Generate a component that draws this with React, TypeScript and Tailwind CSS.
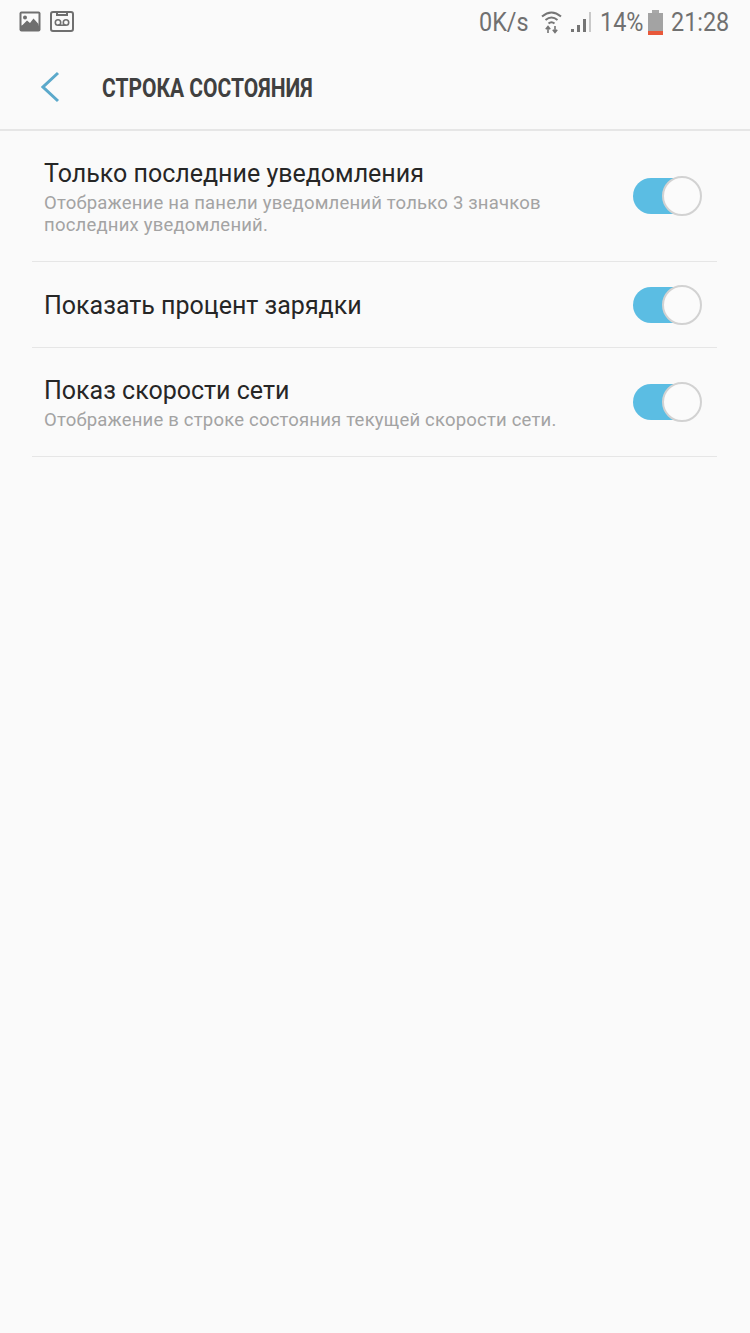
const font = "font-['Roboto',sans-serif]";

function Toggle() {
  return (
    <div className="relative h-[36px] w-[69px] shrink-0">
      <div className="h-[36px] w-[66px] rounded-full bg-[#5bbde3]" />
      <div className="absolute -top-[2px] right-0 h-[40px] w-[40px] rounded-full border-2 border-[#d2d2d2] bg-[#fbfbfb]" />
    </div>
  );
}

function PictureIcon() {
  return (
    <svg width="22" height="21" viewBox="0 0 22 21">
      <rect x="0.5" y="0.5" width="21" height="20" rx="2" fill="#6f6f6f" />
      <rect x="2.5" y="2.5" width="17" height="12" fill="#fafafa" />
      <circle cx="6" cy="6.5" r="2" fill="#6f6f6f" />
      <path d="M2.5 15 L8 9.5 L11 12 L14.5 7.5 L19.5 13 V15 Z" fill="#6f6f6f" />
    </svg>
  );
}

function VoicemailIcon() {
  return (
    <svg width="24" height="21" viewBox="0 0 24 21" fill="none" stroke="#6f6f6f">
      <rect x="1" y="1" width="22" height="19" rx="2" strokeWidth="2" />
      <path d="M7 1.5 V4 H17 V1.5" strokeWidth="2" />
      <circle cx="8" cy="11.5" r="2.7" strokeWidth="1.6" />
      <circle cx="16" cy="11.5" r="2.7" strokeWidth="1.6" />
      <path d="M8 14.2 H16" strokeWidth="1.6" />
    </svg>
  );
}

function WifiIcon() {
  return (
    <svg width="21" height="24" viewBox="0 0 21 24" fill="none" stroke="#757575" strokeWidth="2">
      <path d="M1 6.5 Q10.5 -1.5 20 6.5" />
      <path d="M4.5 10 Q10.5 5 16.5 10" />
      <path d="M7.5 13.5 Q10.5 11 13.5 13.5" />
      <path d="M7 23 V17 M4.8 19.2 L7 16.5 L9.2 19.2" strokeWidth="1.6" />
      <path d="M14 16 V22 M11.8 19.8 L14 22.5 L16.2 19.8" strokeWidth="1.6" />
    </svg>
  );
}

function SignalIcon() {
  return (
    <svg width="21" height="24" viewBox="0 0 21 24">
      <rect x="1" y="19" width="3" height="3" fill="#757575" />
      <rect x="7" y="15" width="3" height="7" fill="#757575" />
      <rect x="13" y="9" width="3" height="13" fill="#757575" />
      <rect x="19" y="2" width="2" height="20" fill="#c9c9c9" />
    </svg>
  );
}

function BatteryIcon() {
  return (
    <div className="flex h-[25px] w-[15px] flex-col items-center">
      <div className="h-[3px] w-[7px] bg-[#a8a8a8]" />
      <div className="h-[18px] w-[15px] bg-[#a3a3a3]" />
      <div className="h-[4px] w-[15px] bg-[#e8583a]" />
    </div>
  );
}

function StatusText({ width, text }: { width: string; text: string }) {
  return (
    <span className={`block ${width}`}>
      <span className="block origin-left scale-x-[0.9] whitespace-nowrap">{text}</span>
    </span>
  );
}

function StatusBar() {
  return (
    <div className="flex h-[44px] items-center justify-between pl-[19px] pr-[20px]">
      <div className="mb-px flex items-center gap-[9px]">
        <PictureIcon />
        <VoicemailIcon />
      </div>
      <div className="flex items-center text-[26px] leading-none text-[#707070]">
        <StatusText width="w-[49px]" text="0K/s" />
        <span className="ml-[13px]"><WifiIcon /></span>
        <span className="ml-[8px]"><SignalIcon /></span>
        <span className="ml-[9px]"><StatusText width="w-[42px]" text="14%" /></span>
        <span className="ml-[6px]"><BatteryIcon /></span>
        <span className="ml-[8px]"><StatusText width="w-[59px]" text="21:28" /></span>
      </div>
    </div>
  );
}

function Header() {
  return (
    <div className="flex h-[87px] items-center border-b-2 border-[#e6e6e6] pl-[41px]">
      <svg width="19" height="32" viewBox="0 0 19 32" fill="none" stroke="#5ba9cb" strokeWidth="3">
        <path d="M17 2 L2 16 L17 30" />
      </svg>
      <h1 className="ml-[42px] mt-[3px] origin-left scale-x-[0.84] whitespace-nowrap text-[25px] font-bold leading-none text-[#404040]">
        СТРОКА СОСТОЯНИЯ
      </h1>
    </div>
  );
}

type RowProps = {
  title: string;
  lines?: string[];
  height: string;
  pad: string;
};

function Row({ title, lines, height, pad }: RowProps) {
  return (
    <div className={`flex items-center justify-between border-b border-[#e6e6e6] pl-[12px] pr-[15px] ${height}`}>
      <div className={`self-start ${pad}`}>
        <div className="mb-[3px] text-[25px] leading-[30px] text-[#262626]">{title}</div>
        {lines?.map((line) => (
          <div key={line} className="whitespace-nowrap text-[18.5px] leading-[22px] tracking-[0.2px] text-[#a3a3a3]">
            {line}
          </div>
        ))}
      </div>
      <Toggle />
    </div>
  );
}

export default function App() {
  return (
    <div className={`h-[1333px] w-[750px] overflow-hidden bg-[#fafafa] ${font}`}>
      <StatusBar />
      <Header />
      <div className="ml-[32px] mr-[33px]">
        <Row
          title="Только последние уведомления"
          lines={["Отображение на панели уведомлений только 3 значков", "последних уведомлений."]}
          height="h-[131px]"
          pad="pt-[28px]"
        />
        <Row title="Показать процент зарядки" height="h-[86px]" pad="pt-[29px]" />
        <Row
          title="Показ скорости сети"
          lines={["Отображение в строке состояния текущей скорости сети."]}
          height="h-[109px]"
          pad="pt-[28px]"
        />
      </div>
    </div>
  );
}
